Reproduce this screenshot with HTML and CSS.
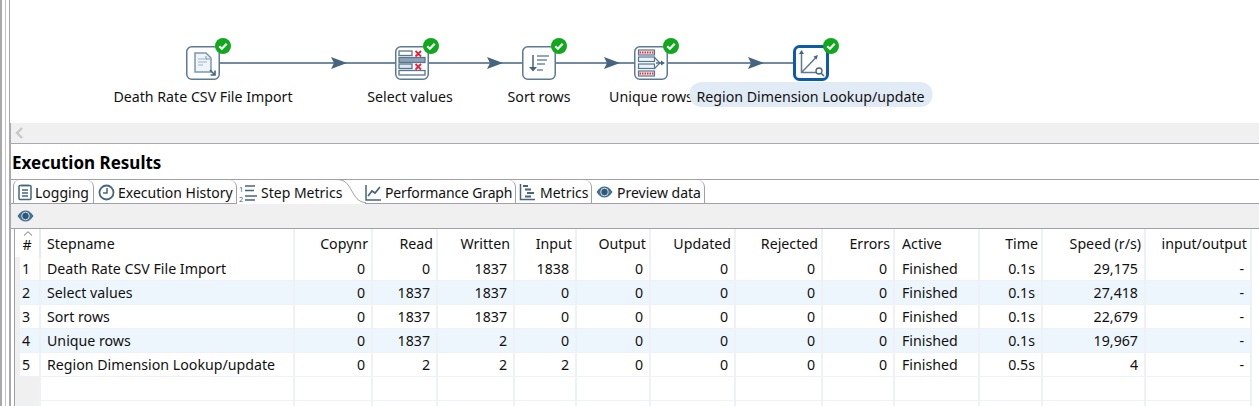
FILE: index.html
```html
<!DOCTYPE html>
<html lang="en">
<head>
<meta charset="utf-8">
<title>Execution Results</title>
<link rel="stylesheet" href="styles.css">
</head>
<body>
<div class="app">
  <div class="sash"></div>
  <div class="main">
    <section class="canvas">
      <svg class="hops" width="1249" height="123" viewBox="0 0 1249 123">
        <g class="hop">
          <path d="M210 63H385M418 63H512M546 63H624M658 63H783"/>
          <path class="head" d="M321 57l16 6-16 6 3-6zM477 57l16 6-16 6 3-6zM594 57l16 6-16 6 3-6zM738 57l16 6-16 6 3-6z"/>
        </g>
      </svg>

      <div class="node n1">
        <svg class="icon" viewBox="0 0 34 34"><rect class="frame" x=".75" y=".75" width="32.5" height="32.5" rx="5"/>
          <path d="M9 7h11l5 5v14H9z" fill="#edf5fb" stroke="#7d98ae" stroke-width="1.5"/><path d="M12 13h9M12 16h9M12 19h5" stroke="#9fb4c5" stroke-width="1.2"/><path d="M20 10v3h4" fill="none" stroke="#7d98ae"/><path d="M24 24l5 5M29 24.500V29h-4.500" fill="none" stroke="#45657f" stroke-width="1.600"/></svg>
        <svg class="badge" viewBox="0 0 16 16"><circle cx="8" cy="8" r="8"/><path d="M4.300 8.300l2.600 2.500 4.800-5"/></svg>
      </div>
      <div class="node n2">
        <svg class="icon" viewBox="0 0 34 34"><rect class="frame" x=".75" y=".75" width="32.500" height="32.500" rx="5"/>
          <g fill="#fff" stroke="#58768f" stroke-width="1.300"><rect x="4" y="5" width="13" height="4.500"/><rect x="4" y="18" width="13" height="4.500" fill="#dfe8ef"/><rect x="4" y="11.500" width="26" height="5" fill="#8ca3b6"/><rect x="4" y="24.500" width="26" height="4.500"/></g>
          <path d="M20.500 5l5.500 5.500M26 5l-5.500 5.500M20.500 18l5.500 5.500M26 18l-5.500 5.500" stroke="#e8213c" stroke-width="1.800"/></svg>
        <svg class="badge" viewBox="0 0 16 16"><circle cx="8" cy="8" r="8"/><path d="M4.300 8.300l2.600 2.500 4.800-5"/></svg>
      </div>
      <div class="node n3">
        <svg class="icon" viewBox="0 0 34 34"><rect class="frame" x=".75" y=".75" width="32.500" height="32.500" rx="5"/>
          <path d="M11 9v15" stroke="#45657f" stroke-width="1.500"/><path d="M7 21l4 4.500 4-4.500z" fill="#45657f"/><path d="M15 10h12M15 14h10M15 18h8M15 24h6" stroke="#6f8ba2" stroke-width="1.500"/></svg>
        <svg class="badge" viewBox="0 0 16 16"><circle cx="8" cy="8" r="8"/><path d="M4.300 8.300l2.600 2.500 4.800-5"/></svg>
      </div>
      <div class="node n4">
        <svg class="icon" viewBox="0 0 34 34"><rect class="frame" x=".75" y=".75" width="32.500" height="32.500" rx="5"/>
          <g stroke="#58768f" stroke-width="1.200"><rect x="4.500" y="4" width="16" height="5" fill="#fbe9e9"/><rect x="4.500" y="11" width="16" height="4.500" fill="#eaf3f9"/><rect x="4.500" y="18" width="16" height="4.500" fill="#eaf3f9"/><rect x="4.500" y="25" width="16" height="5" fill="#fbe9e9"/></g>
          <path d="M5.500 6.500h14M5.500 27.500h14" stroke="#e8303f" stroke-width="2.200" stroke-dasharray="1.500 1"/>
          <path d="M20 11l6 6-6 6" fill="none" stroke="#58768f" stroke-width="1.200"/><path d="M22 17h6" stroke="#45657f" stroke-width="1.400"/><path d="M27 14.500l4 2.500-4 2.500z" fill="#45657f"/></svg>
        <svg class="badge" viewBox="0 0 16 16"><circle cx="8" cy="8" r="8"/><path d="M4.300 8.300l2.600 2.500 4.800-5"/></svg>
      </div>
      <div class="node n5">
        <svg class="icon big" viewBox="0 0 36 36"><rect x="1.500" y="1.500" width="33" height="33" rx="5" fill="#fff" stroke="#0b5ba6" stroke-width="3"/>
          <path d="M8.500 7v20.500H26M8.500 27.500L23 12.500" fill="none" stroke="#5b7b95" stroke-width="1.500"/><path d="M6 9l2.500-4 2.500 4zM20.500 11.500l4.500-1.500-1.500 4.500z" fill="#45657f"/><circle cx="26" cy="26" r="3" fill="#fff" stroke="#45657f" stroke-width="1.300"/><path d="M28 28l3 3" stroke="#45657f" stroke-width="1.500"/></svg>
        <svg class="badge" viewBox="0 0 16 16"><circle cx="8" cy="8" r="8"/><path d="M4.300 8.300l2.600 2.500 4.800-5"/></svg>
      </div>

      <span class="label l1">Death Rate CSV File Import</span>
      <span class="label l2">Select values</span>
      <span class="label l3">Sort rows</span>
      <span class="label l4">Unique rows</span>
      <span class="label l5">Region Dimension Lookup/update</span>
    </section>

    <div class="hscroll">
      <svg width="10" height="14" viewBox="0 0 10 14"><path d="M8 2L3 7l5 5" fill="none" stroke="#c8c8c8" stroke-width="2.400"/></svg>
    </div>

    <h2 class="title">Execution Results</h2>

    <div class="tabs">
      <div class="tab t1">
        <svg width="16" height="18" viewBox="0 0 16 18"><rect x="2" y="2.500" width="12" height="14" rx="1" fill="#fff" stroke="#45657f" stroke-width="1.500"/><path d="M4 2.500h8M5 7h6M5 10h6M5 13h6" stroke="#45657f" stroke-width="1.300"/></svg>
        <span>Logging</span>
      </div>
      <div class="tab t2">
        <svg width="17" height="17" viewBox="0 0 17 17"><circle cx="8.500" cy="8.500" r="7" fill="#fff" stroke="#45657f" stroke-width="1.800"/><path d="M9 4v5H5" fill="none" stroke="#45657f" stroke-width="1.500"/></svg>
        <span>Execution History</span>
      </div>
      <div class="tab active t3">
        <svg width="19" height="20" viewBox="0 0 19 20"><text class="num" x="0" y="8.500">1</text><text class="num" x="0" y="18.500">2</text><path d="M6 3h10M6 7.500h9M6 13h12M6 17h10" stroke="#45657f" stroke-width="1.400"/></svg>
        <span>Step Metrics</span>
        <svg class="curve" width="30" height="25" viewBox="0 0 30 25"><path d="M0 .5c8 0 11 3 15 10s7 13 15 13" fill="none" stroke="#a0a0a6"/></svg>
      </div>
      <div class="tab t4">
        <svg width="17" height="17" viewBox="0 0 17 17"><path d="M1 1v15h15" fill="none" stroke="#45657f" stroke-width="1.500"/><path d="M3 12l4-5 3 2 5-6" fill="none" stroke="#45657f" stroke-width="1.700"/></svg>
        <span class="tight">Performance Graph</span>
      </div>
      <div class="tab t5">
        <svg width="17" height="18" viewBox="0 0 17 18"><path d="M1.500 1v15.500H16" fill="none" stroke="#45657f" stroke-width="1.500"/><path d="M4 3h5M6 6.500h6M8 10h7M6 13.500h6" stroke="#45657f" stroke-width="2"/></svg>
        <span>Metrics</span>
      </div>
      <div class="tab t6">
        <svg width="17" height="12" viewBox="0 0 17 12"><path d="M.5 6C3 2 5.500.5 8.500.5S14 2 16.500 6C14 10 11.500 11.500 8.500 11.500S3 10 .5 6z" fill="#45708f"/><circle cx="8.500" cy="6" r="3.800" fill="#2f5876" stroke="#cfe0ec"/></svg>
        <span>Preview data</span>
      </div>
    </div>

    <div class="toolbar">
      <svg width="17" height="12" viewBox="0 0 17 12"><path d="M.5 6C3 2 5.500.5 8.500.5S14 2 16.500 6C14 10 11.500 11.500 8.500 11.500S3 10 .5 6z" fill="#45708f"/><circle cx="8.500" cy="6" r="3.800" fill="#2f5876" stroke="#cfe0ec"/></svg>
    </div>

    <table class="grid">
      <colgroup>
        <col class="c0"><col class="c1"><col class="c2"><col class="c3"><col class="c4"><col class="c5"><col class="c6"><col class="c7"><col class="c8"><col class="c9"><col class="c10"><col class="c11"><col class="c12"><col class="c13">
      </colgroup>
      <thead>
        <tr>
          <th class="hash"><svg class="sort" width="10" height="5" viewBox="0 0 10 5"><path d="M1 4.500L5 .7l4 3.800" fill="none" stroke="#777"/></svg>#</th>
          <th class="tl">Stepname</th><th>Copynr</th><th>Read</th><th>Written</th><th>Input</th><th>Output</th><th>Updated</th><th>Rejected</th><th>Errors</th><th class="tl">Active</th><th>Time</th><th>Speed (r/s)</th><th>input/output</th>
        </tr>
      </thead>
      <tbody>
        <tr><td class="idx">1</td><td class="tl">Death Rate CSV File Import</td><td>0</td><td>0</td><td>1837</td><td>1838</td><td>0</td><td>0</td><td>0</td><td>0</td><td class="tl">Finished</td><td>0.1s</td><td>29,175</td><td>-</td></tr>
        <tr class="alt"><td class="idx">2</td><td class="tl">Select values</td><td>0</td><td>1837</td><td>1837</td><td>0</td><td>0</td><td>0</td><td>0</td><td>0</td><td class="tl">Finished</td><td>0.1s</td><td>27,418</td><td>-</td></tr>
        <tr><td class="idx">3</td><td class="tl">Sort rows</td><td>0</td><td>1837</td><td>1837</td><td>0</td><td>0</td><td>0</td><td>0</td><td>0</td><td class="tl">Finished</td><td>0.1s</td><td>22,679</td><td>-</td></tr>
        <tr class="alt"><td class="idx">4</td><td class="tl">Unique rows</td><td>0</td><td>1837</td><td>2</td><td>0</td><td>0</td><td>0</td><td>0</td><td>0</td><td class="tl">Finished</td><td>0.1s</td><td>19,967</td><td>-</td></tr>
        <tr><td class="idx">5</td><td class="tl">Region Dimension Lookup/update</td><td>0</td><td>2</td><td>2</td><td>2</td><td>0</td><td>0</td><td>0</td><td>0</td><td class="tl">Finished</td><td>0.5s</td><td>4</td><td>-</td></tr>
        <tr class="empty"><td class="idx"></td><td></td><td></td><td></td><td></td><td></td><td></td><td></td><td></td><td></td><td></td><td></td><td></td><td></td></tr>
        <tr class="empty"><td class="idx"></td><td></td><td></td><td></td><td></td><td></td><td></td><td></td><td></td><td></td><td></td><td></td><td></td><td></td></tr>
      </tbody>
    </table>
  </div>
</div>
</body>
</html>
```
FILE: styles.css
```css
* { box-sizing: border-box; }
html, body { margin: 0; padding: 0; background: #fff; }
body { font-family: "Noto Sans", "Open Sans", sans-serif; font-size: 14.2px; color: #111; }
.app { display: flex; width: 1259px; height: 406px; overflow: hidden; }
.sash { width: 11px; flex: none; border-left: 2px solid #a9a9ad; border-right: 2px solid #a9a9ad; box-shadow: inset 3px 0 0 #fff, inset 4px 0 0 #c4c4c8; background: #fff; }
.main { flex: 1; min-width: 0; }

.canvas { position: relative; height: 123px; margin-left: -1px; background: #fff; }
.hops { position: absolute; left: 0; top: 0; }
.hop path { fill: none; stroke: #45657f; stroke-width: 1.500; }
.hop .head { fill: #45657f; stroke: none; }
.node { position: absolute; top: 46px; width: 34px; height: 34px; }
.n1 { left: 176px; } .n2 { left: 385px; } .n3 { left: 512px; } .n4 { left: 624px; }
.n5 { left: 783px; top: 45px; width: 36px; height: 36px; }
.icon { display: block; width: 34px; height: 34px; }
.icon.big { width: 36px; height: 36px; }
.frame { fill: #fff; stroke: #5b7b95; stroke-width: 1.500; }
.badge { position: absolute; right: -11px; top: -8px; width: 16px; height: 16px; }
.badge circle { fill: #10a81c; }
.badge path { fill: none; stroke: #fff; stroke-width: 2.200; }
.n2 .badge { right: -10px; }
.n5 .badge { right: -10px; top: -7px; }
.label { position: absolute; top: 82px; height: 25px; line-height: 25px; padding-top: 2px; white-space: nowrap; transform: translateX(-50%); }
.l1 { left: 193px; } .l2 { left: 400px; } .l3 { left: 529px; } .l4 { left: 641px; }
.l5 { left: 800.500px; width: 243px; text-align: center; background: #e1ebf5; border-radius: 12px; }

.hscroll { height: 21px; background: #f0f0f0; border-bottom: 1px solid #a9a9ad; padding: 3px 0 0 3px; }
.hscroll svg { display: block; }

.title { margin: 0; height: 35px; padding: 8px 0 0 1px; font-size: 17px; line-height: 22px; font-weight: 700; color: #000; }

.tabs { display: flex; height: 25px; padding-left: 2px; font-size: 14px; border-top: 1px solid #a0a0a6; border-bottom: 1px solid #a0a0a6; background: #fff; }
.tab { display: flex; align-items: center; gap: 3px; height: 24px; margin-bottom: -1px; padding-top: 1px; padding-left: 3px; border-right: 1px solid #a0a0a6; border-top-right-radius: 7px; background: #fff; white-space: nowrap; border-bottom: 1px solid #a0a0a6; }
.tab svg { flex: none; }
.t1 { width: 81px; gap: 2px; border-left: 1px solid #a0a0a6; border-top-left-radius: 6px; }
.t2 { width: 143px; padding-left: 4px; }
.t3 { position: relative; width: 128px; border-right: 0; border-bottom: 0; padding-left: 2px; }
.t3 .curve { position: absolute; left: 99px; top: -1px; }
.t4 { width: 151px; padding-left: 0; }
.t5 { width: 76px; gap: 4px; padding-left: 3px; }
.t6 { width: 113px; gap: 4px; padding-left: 4px; }
.tight { letter-spacing: -.15px; }
.num { font-size: 7.500px; fill: #45657f; }

.toolbar { height: 25px; padding: 6px 0 0 6px; background: #f0f0f0; border-bottom: 1px solid #a0a0a6; }
.toolbar svg { display: block; }

.grid { table-layout: fixed; width: 1238px; margin-left: 3px; border-collapse: separate; border-spacing: 0; border-left: 1px solid #a0a0a6; }
.c0 { width: 26px; } .c1 { width: 254px; } .c2 { width: 78px; } .c3 { width: 65px; } .c4 { width: 77px; } .c5 { width: 62px; } .c6 { width: 74px; } .c7 { width: 85px; } .c8 { width: 87px; } .c9 { width: 72px; } .c10 { width: 85px; } .c11 { width: 63px; } .c12 { width: 103px; } .c13 { width: 106px; }
.grid th, .grid td { padding: 0 6px; text-align: right; font-weight: 400; white-space: nowrap; overflow: hidden; border-right: 2px solid #eef2f7; }
.grid th { height: 28px; padding: 0 3px 0 6px; }
.grid td { height: 24px; border-bottom: 1px solid #eef2f7; }
.grid .tl { text-align: left; }
.grid th:nth-child(11), .grid td:nth-child(11) { padding-left: 7px; }
.grid .hash { position: relative; padding: 3px 0 0; text-align: center; border-right: 2px solid #e5eaf0; }
.sort { position: absolute; left: 8px; top: 2px; }
.grid .idx { text-align: left; padding-left: 7px; box-shadow: inset 5px 0 0 #f0f0f0; }
.alt td { background: #eef6fd; }
.empty .idx { background: #f0f0f0; }
```
